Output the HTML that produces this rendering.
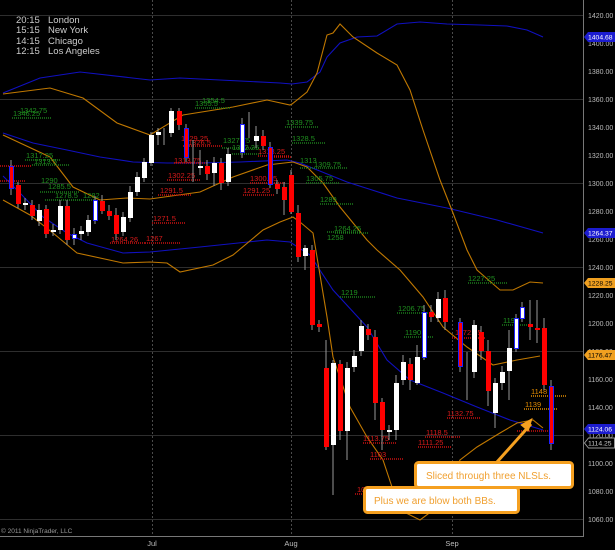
<!DOCTYPE html>
<html><head><meta charset="utf-8"><style>
html,body{margin:0;padding:0;background:#000;width:615px;height:550px;overflow:hidden}
svg{display:block}
text{font-family:"Liberation Sans",sans-serif}
</style></head><body>
<svg width="615" height="550" viewBox="0 0 615 550" xmlns="http://www.w3.org/2000/svg">
<rect width="615" height="550" fill="#000"/>
<g stroke="#2e2e2e" stroke-width="1">
<line x1="0" y1="15.5" x2="583" y2="15.5"/><line x1="0" y1="99.5" x2="583" y2="99.5"/>
<line x1="0" y1="183.5" x2="583" y2="183.5"/><line x1="0" y1="267.5" x2="583" y2="267.5"/>
<line x1="0" y1="351.5" x2="583" y2="351.5"/><line x1="0" y1="435.5" x2="583" y2="435.5"/>
<line x1="0" y1="519.5" x2="583" y2="519.5"/>
</g>
<g stroke="#4a4a4a" stroke-dasharray="2,2">
<line x1="152.5" y1="0" x2="152.5" y2="537"/><line x1="291.5" y1="0" x2="291.5" y2="537"/><line x1="452.5" y1="0" x2="452.5" y2="537"/>
</g>
<line x1="0" y1="536.5" x2="583" y2="536.5" stroke="#777"/>
<line x1="583.5" y1="0" x2="583.5" y2="537" stroke="#777"/>
<g fill="#bbb" font-size="7.5">
<text x="152" y="546" text-anchor="middle">Jul</text><text x="291" y="546" text-anchor="middle">Aug</text><text x="452" y="546" text-anchor="middle">Sep</text>
<text x="1" y="533" font-size="6.5" fill="#999">© 2011 NinjaTrader, LLC</text>
</g>
<g fill="#bbb" font-size="7">
<text x="588" y="18">1420.00</text><text x="588" y="46">1400.00</text><text x="588" y="74">1380.00</text>
<text x="588" y="102">1360.00</text><text x="588" y="130">1340.00</text><text x="588" y="158">1320.00</text>
<text x="588" y="186">1300.00</text><text x="588" y="214">1280.00</text><text x="588" y="242">1260.00</text>
<text x="588" y="270">1240.00</text><text x="588" y="298">1220.00</text><text x="588" y="326">1200.00</text>
<text x="588" y="354">1180.00</text><text x="588" y="382">1160.00</text><text x="588" y="410">1140.00</text>
<text x="588" y="438">1120.00</text><text x="588" y="466">1100.00</text><text x="588" y="494">1080.00</text>
<text x="588" y="522">1060.00</text>
</g>
<g fill="#ccc" font-size="9.5">
<text x="16" y="23">20:15</text><text x="48" y="23">London</text>
<text x="16" y="33">15:15</text><text x="48" y="33">New York</text>
<text x="16" y="44">14:15</text><text x="48" y="44">Chicago</text>
<text x="16" y="54">12:15</text><text x="48" y="54">Los Angeles</text>
</g>
<g fill="none" stroke-width="1.1">
<polyline stroke="#1010c0" points="3,93 40,78 80,72 150,80 180,78 240,81 280,83 292,84 307,82 320,72 327,57 340,43 357,37 377,36 397,24 420,22 447,24 480,25 507,26 527,30 543,37"/>
<polyline stroke="#1010c0" points="3,133 33,143 67,150 100,157 133,162 167,163 200,163 240,162 287,160 300,163 347,182 397,198 447,208 497,220 543,233"/>
<polyline stroke="#1010c0" points="3,176 20,193 43,217 67,233 87,243 123,253 150,252 200,247 267,240 290,242 310,255 333,290 367,327 387,360 410,380 443,393 477,407 510,420 543,430"/>
<polyline stroke="#c07800" points="3,94 50,88 83,98 117,123 150,135 183,115 233,107 267,100 290,105 292,104 307,92 317,73 327,35 333,33 340,24 353,37 377,53 397,65 410,90 423,130 440,180 453,213 467,250 477,270 500,290 513,290 530,282 543,283"/>
<polyline stroke="#c07800" points="3,135 50,157 73,187 100,200 127,198 150,199 200,192 233,177 267,165 293,162 307,167 323,183 340,207 367,240 377,250 400,270 423,297 443,327 467,347 493,365 517,360 540,356"/>
<polyline stroke="#c07800" points="3,200 30,215 53,233 77,253 123,263 150,262 167,263 180,272 213,265 233,255 263,230 280,222 293,217 300,222 313,233 327,317 333,357 350,407 367,437 383,460 393,490 400,510 420,520 440,505 460,460 477,447 500,433 517,423 533,420 543,428"/>
</g>
<g stroke-dasharray="1,1" stroke-width="1.5" fill="none">
<g stroke="#1a7a1a">
<line x1="12" y1="118" x2="52" y2="118"/><line x1="25" y1="160" x2="60" y2="160"/><line x1="32" y1="165" x2="70" y2="165"/>
<line x1="40" y1="192" x2="80" y2="192"/><line x1="45" y1="200" x2="80" y2="200"/><line x1="55" y1="200" x2="95" y2="200"/>
<line x1="195" y1="108" x2="230" y2="108"/><line x1="222" y1="148" x2="260" y2="148"/><line x1="232" y1="154" x2="262" y2="154"/>
<line x1="285" y1="127" x2="318" y2="127"/><line x1="292" y1="143" x2="325" y2="143"/><line x1="300" y1="168" x2="347" y2="168"/>
<line x1="306" y1="183" x2="340" y2="183"/><line x1="320" y1="204" x2="354" y2="204"/><line x1="335" y1="233" x2="368" y2="233"/>
<line x1="327" y1="232" x2="361" y2="232"/><line x1="340" y1="297" x2="375" y2="297"/><line x1="397" y1="313" x2="430" y2="313"/>
<line x1="404" y1="337" x2="433" y2="337"/><line x1="468" y1="283" x2="508" y2="283"/><line x1="502" y1="325" x2="530" y2="325"/>
</g>
<g stroke="#c81010">
<line x1="0" y1="166" x2="32" y2="166"/><line x1="0" y1="181" x2="25" y2="181"/><line x1="110" y1="243" x2="145" y2="243"/>
<line x1="145" y1="243" x2="180" y2="243"/><line x1="152" y1="223" x2="185" y2="223"/><line x1="158" y1="195" x2="192" y2="195"/>
<line x1="167" y1="180" x2="200" y2="180"/><line x1="174" y1="163" x2="208" y2="163"/><line x1="183" y1="146" x2="222" y2="146"/>
<line x1="243" y1="195" x2="275" y2="195"/><line x1="250" y1="183" x2="285" y2="183"/><line x1="258" y1="156" x2="290" y2="156"/>
<line x1="270" y1="157" x2="291" y2="157"/>
<line x1="452" y1="338" x2="485" y2="338"/><line x1="447" y1="418" x2="480" y2="418"/><line x1="425" y1="437" x2="460" y2="437"/>
<line x1="418" y1="447" x2="452" y2="447"/><line x1="363" y1="443" x2="396" y2="443"/><line x1="370" y1="459" x2="403" y2="459"/>
<line x1="355" y1="494" x2="388" y2="494"/><line x1="517" y1="431" x2="548" y2="431"/>
</g>
<g stroke="#e08a00">
<line x1="531" y1="396" x2="566" y2="396"/><line x1="524" y1="409" x2="558" y2="409"/>
</g>
</g>
<g font-size="7.5">
<g fill="#1f8f1f">
<text x="13" y="116">1346.25</text><text x="20" y="113">1342.75</text><text x="26" y="158">1317.25</text><text x="34" y="164">1313.5</text>
<text x="41" y="183">1290</text><text x="48" y="189">1285.5</text><text x="55" y="198">1278.5</text><text x="83" y="198">1282</text>
<text x="195" y="106">1355.5</text><text x="202" y="103">1354.5</text><text x="223" y="143">1327.75</text><text x="232" y="150">1322.25</text>
<text x="286" y="125">1339.75</text><text x="292" y="141">1328.5</text><text x="300" y="163">1313</text><text x="314" y="167">1309.75</text>
<text x="306" y="181">1305.75</text><text x="320" y="202">1289</text><text x="334" y="231">1264.25</text><text x="327" y="240">1258</text>
<text x="341" y="295">1219</text><text x="398" y="311">1206.75</text><text x="405" y="335">1190</text><text x="468" y="281">1227.25</text>
<text x="503" y="323">1198</text>
</g>
<g fill="#d81a1a">
<text x="181" y="141">1329.25</text><text x="188" y="145">1326.5</text><text x="174" y="163">1313.75</text><text x="168" y="178">1302.25</text>
<text x="160" y="193">1291.5</text><text x="153" y="221">1271.5</text><text x="111" y="242">1264.26</text><text x="146" y="241">1267</text>
<text x="258" y="154">1313.25</text><text x="250" y="181">1300.25</text><text x="243" y="193">1291.25</text>
<text x="455" y="335">1172.25</text><text x="447" y="416">1132.75</text><text x="426" y="435">1118.5</text><text x="418" y="445">1111.25</text>
<text x="363" y="441">1113.75</text><text x="370" y="457">1103</text><text x="357" y="492">1086</text>
</g>
<g fill="#e08a00"><text x="531" y="394">1148</text><text x="525" y="407">1139</text></g>
</g>
<g stroke="#999" stroke-width="1">
<path d="M11 160V195M18 182V208M25 198V210M32 200V220M39 204V226M46 205V238M53 224V236M60 200V234M67 200V245M74 228V245M81 226V240M88 215V236M95 196V224M102 195V214M109 205V220M116 208V240M123 212V236M130 186V222M137 172V196M144 158V182M151 132V166M158 128V145M164 128V145M171 108V137M179 108V130M186 124V162M193 140V182M200 150V175M207 160V180M214 157V186M221 158V190M228 148V186M242 118V158M249 112V138M256 126V148M263 130V150M270 142V188M277 180V194M284 182V215M291 170V214M298 205V262M305 245V270M312 245V330M319 320V332M326 340V450M333 360V495M340 360V440M347 362V460M354 350V372M361 320V356M368 324V340M375 330V420M382 398V450M389 425V440M396 375V440M403 355V385M410 358V390M417 345V385M424 305V360M431 305V322M438 292V322M445 290V330M460 318V372M467 352V400M474 320V378M481 326V360M488 340V406M495 378V428M502 366V390M509 330V400M516 314V352M522 302V322M530 300V340M537 300V343M544 318V390M551 380V450"/>
</g>
<g fill="#fff">
<rect x="23" y="203" width="5" height="2"/><rect x="37" y="210" width="5" height="11"/><rect x="51" y="230" width="5" height="2"/>
<rect x="58" y="206" width="5" height="24"/><rect x="79" y="231" width="5" height="3"/><rect x="86" y="220" width="5" height="12"/>
<rect x="121" y="217" width="5" height="15"/><rect x="128" y="192" width="5" height="26"/><rect x="135" y="177" width="5" height="15"/>
<rect x="142" y="162" width="5" height="16"/><rect x="149" y="135" width="5" height="28"/><rect x="156" y="132" width="5" height="3"/>
<rect x="169" y="111" width="5" height="22"/><rect x="198" y="166" width="5" height="2"/><rect x="212" y="163" width="5" height="10"/>
<rect x="226" y="154" width="5" height="28"/><rect x="254" y="136" width="5" height="5"/>
<rect x="303" y="248" width="5" height="8"/><rect x="331" y="363" width="5" height="82"/><rect x="345" y="368" width="5" height="63"/>
<rect x="352" y="356" width="5" height="11"/><rect x="359" y="326" width="5" height="25"/><rect x="387" y="430" width="5" height="2"/>
<rect x="394" y="383" width="5" height="47"/><rect x="401" y="362" width="5" height="18"/><rect x="415" y="357" width="5" height="26"/>
<rect x="436" y="299" width="5" height="19"/><rect x="472" y="325" width="5" height="47"/><rect x="493" y="383" width="5" height="30"/>
<rect x="500" y="372" width="5" height="11"/><rect x="507" y="348" width="5" height="23"/>
</g>
<g fill="#fff" stroke="#2020ff" stroke-width="1">
<rect x="72.5" y="234.5" width="4" height="4"/><rect x="93.5" y="200.5" width="4" height="20"/><rect x="240.5" y="124.5" width="4" height="28"/>
<rect x="422.5" y="312.5" width="4" height="45"/><rect x="514.5" y="318.5" width="4" height="30"/><rect x="520.5" y="307.5" width="4" height="11"/>
</g>
<g fill="#f00">
<rect x="16" y="185" width="5" height="19"/><rect x="30" y="205" width="5" height="11"/><rect x="44" y="209" width="5" height="25"/>
<rect x="65" y="206" width="5" height="34"/><rect x="100" y="201" width="5" height="10"/><rect x="107" y="211" width="5" height="5"/>
<rect x="114" y="215" width="5" height="19"/><rect x="177" y="111" width="5" height="14"/><rect x="205" y="166" width="5" height="8"/>
<rect x="219" y="163" width="5" height="20"/><rect x="261" y="136" width="5" height="10"/><rect x="275" y="184" width="5" height="5"/>
<rect x="282" y="187" width="5" height="13"/><rect x="289" y="175" width="5" height="37"/><rect x="296" y="213" width="5" height="44"/>
<rect x="310" y="250" width="5" height="75"/><rect x="317" y="324" width="5" height="3"/><rect x="324" y="368" width="5" height="79"/>
<rect x="338" y="364" width="5" height="67"/><rect x="366" y="329" width="5" height="6"/><rect x="373" y="337" width="5" height="66"/>
<rect x="380" y="402" width="5" height="28"/><rect x="408" y="364" width="5" height="16"/><rect x="429" y="312" width="5" height="5"/>
<rect x="443" y="298" width="5" height="24"/><rect x="479" y="332" width="5" height="19"/><rect x="486" y="351" width="5" height="40"/>
<rect x="528" y="324" width="5" height="3"/><rect x="535" y="328" width="5" height="2"/><rect x="542" y="328" width="5" height="57"/>
</g>
<g fill="#f00" stroke="#2020ff" stroke-width="1">
<rect x="9.5" y="166.5" width="4" height="22"/><rect x="184.5" y="128.5" width="4" height="29"/><rect x="268.5" y="147.5" width="4" height="37"/>
<rect x="458.5" y="322.5" width="4" height="44"/><rect x="549.5" y="386.5" width="4" height="57"/>
</g>
<g font-size="6.8">
<path d="M584 37l4-5h27v10h-27z" fill="#1c1cd0"/><text x="588" y="39.5" fill="#fff">1404.68</text>
<path d="M584 233l4-5h27v10h-27z" fill="#1c1cd0"/><text x="588" y="235.5" fill="#fff">1264.37</text>
<path d="M584 283l4-5h27v10h-27z" fill="#f0a020"/><text x="588" y="285.5" fill="#000">1228.25</text>
<path d="M584 355l4-5h27v10h-27z" fill="#f0a020"/><text x="588" y="357.5" fill="#000">1176.47</text>
<path d="M584 429l4-5h27v10h-27z" fill="#1c1cd0"/><text x="588" y="431.5" fill="#fff">1124.06</text>
<path d="M584.5 443l4-5h26v10h-26z" fill="#000" stroke="#999"/><text x="588" y="445.5" fill="#ccc">1114.25</text>
</g>
<path d="M497 462L531 424" stroke="#f5a020" stroke-width="3"/>
<path d="M531 420l-3 10l-6-5z" fill="#f5a020" stroke="#f5a020" stroke-width="2"/>
<rect x="415.5" y="462.5" width="157" height="25" rx="3" fill="#fff" stroke="#f5a020" stroke-width="3"/>
<text x="426" y="479" font-size="10" fill="#f0a030">Sliced through three NLSLs.</text>
<rect x="364.5" y="487.5" width="154" height="25" rx="3" fill="#fff" stroke="#f5a020" stroke-width="3"/>
<text x="374" y="504" font-size="10" fill="#f0a030">Plus we are blow both BBs.</text>
</svg>
</body></html>
